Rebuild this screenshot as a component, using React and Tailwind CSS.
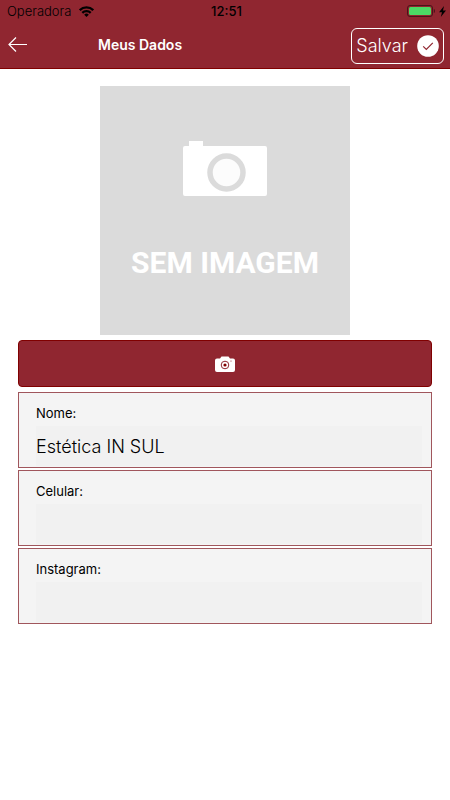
import { useState } from "react";

function StatusBar() {
  return (
    <div className="grid h-6 grid-cols-3 items-center pb-[2px] pl-[7px] pr-1 text-[13px] leading-4 text-black">
      <div className="flex items-center gap-2">
        <span className="font-light">Operadora</span>
        <svg className="h-[11px] w-[15px]" viewBox="0 0 15 11" fill="none" stroke="currentColor" strokeWidth="2.3">
          <path d="M.8 4.200a9.500 9.500 0 0 1 13.400 0" />
          <path d="M3.300 6.900a6 6 0 0 1 8.400 0" />
          <path d="M7.500 11 5.200 8.700a3.300 3.300 0 0 1 4.600 0Z" fill="currentColor" stroke="none" />
        </svg>
      </div>
      <span className="text-center font-medium">12:51</span>
      <div className="flex items-center justify-end gap-1">
        <svg className="h-3 w-7" viewBox="0 0 28 12">
          <rect x="0.5" y="0.5" width="25" height="11" rx="2.5" fill="none" stroke="#4a141a" />
          <rect x="2" y="2" width="22" height="8" rx="1.5" fill="#4cd964" />
          <path d="M26.800 4v4c1-.4 1.200-1.200 1.200-2s-.2-1.600-1.200-2Z" fill="#4a141a" />
        </svg>
        <svg className="h-[11px] w-[7px]" viewBox="0 0 7 11" fill="#000">
          <path d="M5 0 0 6.200h3L1.800 11 7 4.600H4Z" />
        </svg>
      </div>
    </div>
  );
}

function Header() {
  return (
    <header className="border-b border-[#800000] bg-[#902630]">
      <StatusBar />
      <div className="flex h-11 items-center pl-2 pr-[6px] text-white">
        <button type="button" aria-label="Voltar" className="mr-[70px] pb-1">
          <svg className="h-4 w-5" viewBox="0 0 20 16" fill="none" stroke="currentColor" strokeWidth="1.2">
            <path d="M19 8.500H1M8 1.500l-7 7 7 7" />
          </svg>
        </button>
        <h1 className="pb-[2px] text-[14px] font-semibold leading-5">Meus Dados</h1>
        <button
          type="button"
          className="ml-auto mb-px flex h-9 items-center gap-[9px] rounded-md border border-white px-1 text-[18px] font-light leading-6"
        >
          Salvar
          <svg className="h-[22px] w-[22px]" viewBox="0 0 22 22">
            <circle cx="11" cy="11" r="10.800" fill="#fff" />
            <path d="m6.200 11.300 3.100 3.200 6.500-6.700" fill="none" stroke="#902630" strokeWidth="1.200" />
          </svg>
        </button>
      </div>
    </header>
  );
}

function EmptyPhoto() {
  return (
    <div className="mx-auto flex h-[249px] w-[250px] flex-col items-center bg-[#dbdbdb] pt-[55px]">
      <svg className="h-[56px] w-[84px]" viewBox="0 0 84 56">
        <path d="M6 5V0h14v5h62a2 2 0 0 1 2 2v46a2 2 0 0 1-2 2H2a2 2 0 0 1-2-2V7a2 2 0 0 1 2-2Z" fill="#fff" />
        <circle cx="43.500" cy="31.500" r="16.500" fill="#fcfcfc" stroke="#dbdbdb" strokeWidth="5.500" />
      </svg>
      <span className="mt-[46px] font-['Roboto',sans-serif] text-[30px] font-bold leading-10 text-white">
        SEM IMAGEM
      </span>
    </div>
  );
}

function Field({ id, label, value, type = "text", onChange }) {
  return (
    <div className="border border-[#a0565c] bg-[#f4f4f4] pb-px pl-[17px] pr-[9px] pt-[11px] text-black">
      <label htmlFor={id} className="block text-[13px] leading-[18px]">
        {label}
      </label>
      <input
        id={id}
        type={type}
        value={value}
        onChange={(e) => onChange(id, e.target.value)}
        className="mt-1 block h-10 w-full bg-[#f1f1f1] text-[18px] font-light leading-6 outline-none"
      />
    </div>
  );
}

export default function App() {
  const [form, setForm] = useState({ nome: "Estética IN SUL", celular: "", instagram: "" });

  const handleChange = (id, value) => setForm({ ...form, [id]: value });

  return (
    <div className="min-h-screen bg-white font-['Inter',sans-serif]">
      <Header />
      <main className="px-[18px] pt-[17px]">
        <EmptyPhoto />

        <button
          type="button"
          aria-label="Alterar imagem"
          className="mt-[5px] flex h-[47px] w-full items-center justify-center rounded border border-[#800000] bg-[#902630]"
        >
          <svg className="h-4 w-5" viewBox="0 0 20 16">
            <path
              d="M2 2.500h3l1.500-2h7l1.500 2h3a2 2 0 0 1 2 2V14a2 2 0 0 1-2 2H2a2 2 0 0 1-2-2V4.500a2 2 0 0 1 2-2Z"
              fill="#fff"
            />
            <circle cx="10" cy="9" r="3.800" fill="none" stroke="#902630" strokeWidth="1" />
            <circle cx="10" cy="9" r="1.600" fill="#800000" />
            <circle cx="16" cy="5" r="0.600" fill="#902630" />
          </svg>
        </button>

        <form className="mt-[5px] flex flex-col gap-[2px]">
          <Field id="nome" label="Nome:" value={form.nome} onChange={handleChange} />
          <Field id="celular" label="Celular:" type="tel" value={form.celular} onChange={handleChange} />
          <Field id="instagram" label="Instagram:" value={form.instagram} onChange={handleChange} />
        </form>
      </main>
    </div>
  );
}
